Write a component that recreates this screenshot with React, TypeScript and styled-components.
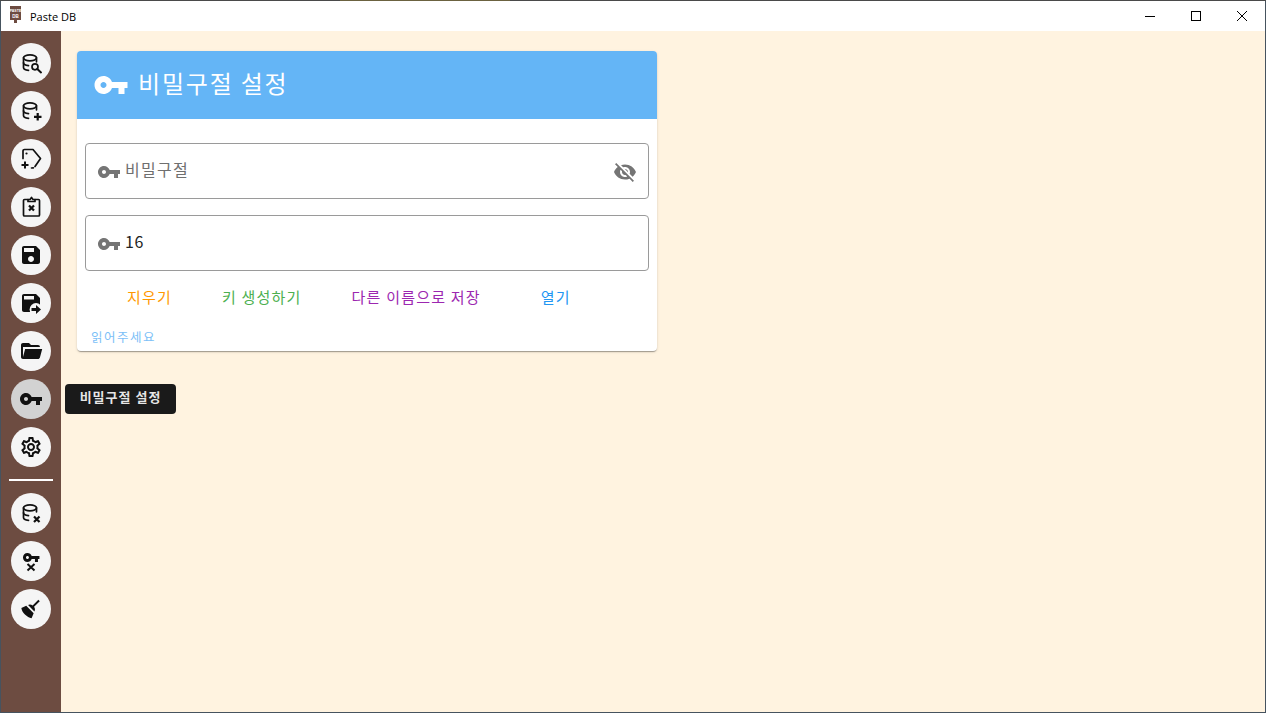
import React from "react";
import styled, { createGlobalStyle } from "styled-components";
import { MdOutlineSettings } from "react-icons/md";

const Global = createGlobalStyle`
  html, body { margin: 0; padding: 0; height: 713px; overflow: hidden; background: #fff3e0; }
  #root { height: 713px; }
  * { box-sizing: border-box; }
`;

const KR = `"Noto Sans CJK KR", "Noto Sans", sans-serif`;

const KEY = "M12.65 10C11.83 7.67 9.61 6 7 6c-3.31 0-6 2.69-6 6s2.69 6 6 6c2.61 0 4.83-1.67 5.65-4H17v4h4v-4h2v-4H12.65zM7 14c-1.1 0-2-.9-2-2s.9-2 2-2 2 .9 2 2-.9 2-2 2z";
const EYE_OFF = "M12 7c2.76 0 5 2.24 5 5 0 .65-.13 1.26-.36 1.83l2.92 2.92c1.51-1.26 2.7-2.89 3.43-4.75-1.73-4.39-6-7.5-11-7.5-1.4 0-2.74.25-3.98.7l2.16 2.16C10.74 7.13 11.35 7 12 7zM2 4.27l2.28 2.28.46.46C3.08 8.3 1.78 10.02 1 12c1.73 4.39 6 7.5 11 7.5 1.55 0 3.03-.3 4.38-.84l.42.42L19.73 22 21 20.73 3.27 3 2 4.27zM7.53 9.8l1.55 1.55c-.05.21-.08.43-.08.65 0 1.66 1.34 3 3 3 .22 0 .44-.03.65-.08l1.55 1.55c-.67.33-1.41.53-2.2.53-2.76 0-5-2.24-5-5 0-.79.2-1.53.53-2.2zm4.31-.78l3.15 3.15.02-.16c0-1.66-1.34-3-3-3l-.17.01z";

const Frame = styled.div`
  width: 1266px;
  height: 713px;
  display: flex;
  flex-direction: column;
  background: #fff3e0;
  border-left: 1px solid #46535f;
  border-right: 1px solid #46535f;
  border-bottom: 1px solid #46535f;
`;
const TopEdge = styled.div`
  height: 1px;
  margin: 0 -1px;
  flex: none;
  background: linear-gradient(90deg, #4a4a4a 0 340px, #6b6240 340px 510px, #4a4a4a 510px);
`;
const TitleBar = styled.header`
  height: 30px;
  flex: none;
  background: #fff;
  display: flex;
  align-items: center;
  padding-left: 9px;
`;
const Logo = styled.svg`
  width: 11px;
  height: 17px;
  margin: 0 9px 3px 0;
  flex: none;
`;
const AppName = styled.span`
  font: 11px "Open Sans", "Noto Sans", sans-serif;
  color: #000;
  flex: 1;
`;
const WinButton = styled.div`
  width: 46px;
  height: 30px;
  display: flex;
  align-items: center;
  justify-content: center;
`;
const Body = styled.div`
  flex: 1;
  display: flex;
  min-height: 0;
`;
const Rail = styled.nav`
  width: 60px;
  flex: none;
  background: #6d4c41;
  padding: 12px 0 0 10px;
  display: flex;
  flex-direction: column;
  gap: 8px;
  position: relative;
`;
const RoundButton = styled.div<{ $active?: boolean }>`
  width: 40px;
  height: 40px;
  border-radius: 50%;
  background: ${(p) => (p.$active ? "#d2d2d2" : "#f5f5f5")};
  display: flex;
  align-items: center;
  justify-content: center;
  color: #111;
`;
const Divider = styled.hr`
  width: 44px;
  height: 2px;
  border: 0;
  margin: 4px 0 4px -2px;
  background: #fff;
`;
const Tip = styled.div`
  position: absolute;
  left: 64px;
  top: 353px;
  width: 111px;
  height: 30px;
  padding-bottom: 5px;
  border-radius: 4px;
  background: #1a1a1a;
  color: #e6e6e6;
  font: 700 13px ${KR};
  letter-spacing: 1px;
  display: flex;
  align-items: center;
  justify-content: center;
  z-index: 2;
`;
const Main = styled.main`
  flex: 1;
  padding: 20px 0 0 16px;
`;
const Card = styled.section`
  width: 580px;
  height: 300px;
  background: #fff;
  border-radius: 4px;
  overflow: hidden;
  box-shadow: 0 2px 1px -1px rgba(0,0,0,.2), 0 1px 1px 0 rgba(0,0,0,.14), 0 1px 3px 0 rgba(0,0,0,.12);
  display: flex;
  flex-direction: column;
`;
const CardHead = styled.div`
  height: 68px;
  background: #64b5f6;
  color: #fff;
  display: flex;
  align-items: center;
  padding: 0 0 0 16px;
  gap: 9px;
`;
const CardTitle = styled.h1`
  margin: 0;
  font: 400 24px ${KR};
  letter-spacing: 1.8px;
  position: relative;
  top: -3px;
`;
const CardBody = styled.div`
  padding: 24px 8px 0;
  display: flex;
  flex-direction: column;
  gap: 16px;
`;
const Field = styled.div`
  height: 56px;
  border: 1px solid #9a9a9a;
  border-radius: 4px;
  display: flex;
  align-items: center;
  padding: 0 11px;
`;
const FieldIcon = styled.svg`
  width: 24px;
  height: 24px;
  fill: #757575;
  flex: none;
  position: relative;
  top: 1px;
`;
const FieldText = styled.span<{ $placeholder?: boolean }>`
  flex: 1;
  margin-left: 4px;
  font: 400 16px ${KR};
  letter-spacing: ${(p) => (p.$placeholder ? "1.3px" : "0.5px")};
  color: ${(p) => (p.$placeholder ? "#6f6f6f" : "#222")};
  position: relative;
  top: -2px;
`;
const Actions = styled.div`
  display: flex;
  padding-left: 50px;
  margin-top: 15px;
  height: 20px;
  align-items: center;
`;
const Action = styled.span<{ $color: string; $gap: number }>`
  color: ${(p) => p.$color};
  font: 400 15px ${KR};
  letter-spacing: 1.2px;
  margin-right: ${(p) => p.$gap}px;
  white-space: nowrap;
`;
const ReadMe = styled.a`
  font: 400 12.5px ${KR};
  letter-spacing: 1.5px;
  color: #7cc0f7;
  margin: 23px 0 0 14px;
  display: block;
  line-height: 16px;
`;

const Svg = styled.svg`
  width: 24px;
  height: 24px;
  flex: none;
`;

const Stroke = ({ children }: { children: React.ReactNode }) => (
  <Svg viewBox="0 0 24 24" fill="none" stroke="#111" strokeWidth="1.7" strokeLinecap="round" strokeLinejoin="round">{children}</Svg>
);
const Fill = ({ d, children }: { d?: string; children?: React.ReactNode }) => (
  <Svg viewBox="0 0 24 24" fill="#111">{d && <path d={d} />}{children}</Svg>
);

const DbBase = () => (
  <>
    <ellipse cx="11" cy="6.8" rx="6.5" ry="3" />
    <path d="M4.5 6.8v9.7c0 1.4 2 2.5 5 2.8" />
    <path d="M17.5 6.8v4" />
    <path d="M4.5 11.8c0 1.4 2 2.5 5 2.8" />
  </>
);

const icons: React.ReactNode[] = [
  <Stroke><DbBase /><circle cx="16" cy="15.8" r="3" /><path d="M18.3 18l3.7 3.4" strokeWidth="2" /></Stroke>,
  <Stroke><DbBase /><path d="M18.7 14v7.5M15 17.8h7.5" strokeWidth="2.2" strokeLinecap="butt" /></Stroke>,
  <Stroke><path d="M4 11.5V4a1.5 1.5 0 0 1 1.5-1.5H14l7.5 9-5.5 8" /><path d="M12.5 21l1.8-.2" /><circle cx="7.5" cy="6.5" r="1.1" fill="#111" stroke="none" /><path d="M6 14.5v7M2.5 18h7" strokeWidth="2" strokeLinecap="butt" /></Stroke>,
  <Stroke><path d="M9 4.5H5.5a1 1 0 0 0-1 1V20a1 1 0 0 0 1 1h14a1 1 0 0 0 1-1V5.5a1 1 0 0 0-1-1H16" /><path d="M9 6.5V4.5h2l1.5-2 1.5 2h2v2z" /><path d="M10 10.5l5 5M15 10.5l-5 5" strokeWidth="2.2" strokeLinecap="butt" /></Stroke>,
  <Fill d="M17 3H5c-1.11 0-2 .9-2 2v14c0 1.1.89 2 2 2h14c1.1 0 2-.9 2-2V7l-4-4zm-5 16c-1.66 0-3-1.34-3-3s1.34-3 3-3 3 1.34 3 3-1.34 3-3 3zm3-10H5V5h10v4z" />,
  <Fill>
    <path d="M17 3H5c-1.11 0-2 .9-2 2v14c0 1.1.89 2 2 2h14c1.1 0 2-.9 2-2V7l-4-4z" />
    <rect x="5" y="5" width="10" height="3.5" fill="#f5f5f5" />
    <circle cx="17" cy="18.5" r="6.4" fill="#f5f5f5" />
    <path d="M12.5 17h4.5v-3l5 4.5-5 4.5v-3h-4.5z" />
  </Fill>,
  <Fill d="M19,20H4C2.89,20 2,19.1 2,18V6C2,4.89 2.89,4 4,4H10L12,6H19A2,2 0 0,1 21,8H21L4,8V18L6.14,10H23.21L20.93,18.5C20.7,19.37 19.92,20 19,20Z" />,
  <Fill d={KEY} />,
  <MdOutlineSettings size={24} color="#111" />,
];
const icons2: React.ReactNode[] = [
  <Stroke><DbBase /><path d="M15 15.5l5.5 5.5M20.5 15.5L15 21" strokeLinecap="butt" strokeWidth="2.2" /></Stroke>,
  <Fill><g transform="translate(3.2 -0.5) scale(.75)"><path d={KEY} /></g><path d="M8.5 15l7 6.5M15.5 15l-7 6.5" stroke="#111" strokeWidth="2" fill="none" /></Fill>,
  <Fill d="M19.36,2.72L20.78,4.14L15.06,9.85C16.13,11.39 16.28,13.24 15.38,14.44L9.06,8.12C10.26,7.22 12.11,7.37 13.65,8.44L19.36,2.72M5.93,17.57C3.92,15.56 2.69,13.16 2.35,10.92L7.23,8.83L14.67,16.27L12.58,21.15C10.34,20.81 7.94,19.58 5.93,17.57Z" />,
];

export default function App() {
  return (
    <>
      <Global />
      <Frame>
        <TopEdge />
        <TitleBar>
          <Logo viewBox="0 0 11 17">
            <rect x="0" y="0" width="11" height="14" fill="#6d4c41" />
            <rect x="4" y="14" width="3" height="3" fill="#6d4c41" />
            <text x="5.5" y="5.5" fontSize="3.6" fill="#fff" textAnchor="middle" fontFamily="Liberation Sans" fontWeight="700">PASTE</text>
            <text x="5.5" y="11.5" fontSize="4.5" fill="#fff" textAnchor="middle" fontFamily="Liberation Sans" fontWeight="700">DB</text>
          </Logo>
          <AppName>Paste DB</AppName>
          <WinButton><svg width="10" height="10" viewBox="0 0 10 10"><path d="M0 5.5h10" stroke="#000" /></svg></WinButton>
          <WinButton><svg width="10" height="10" viewBox="0 0 10 10"><rect x=".5" y=".5" width="9" height="9" fill="none" stroke="#000" /></svg></WinButton>
          <WinButton><svg width="10" height="10" viewBox="0 0 10 10"><path d="M0 0l10 10M10 0L0 10" stroke="#000" /></svg></WinButton>
        </TitleBar>
        <Body>
          <Rail>
            {icons.map((ic, i) => <RoundButton key={i} $active={i === 7}>{ic}</RoundButton>)}
            <Divider />
            {icons2.map((ic, i) => <RoundButton key={i}>{ic}</RoundButton>)}
            <Tip>비밀구절 설정</Tip>
          </Rail>
          <Main>
            <Card>
              <CardHead>
                <svg width="36" height="36" viewBox="0 0 24 24" fill="#fff"><path d={KEY} /></svg>
                <CardTitle>비밀구절 설정</CardTitle>
              </CardHead>
              <CardBody>
                <Field>
                  <FieldIcon viewBox="0 0 24 24"><path d={KEY} /></FieldIcon>
                  <FieldText $placeholder>비밀구절</FieldText>
                  <FieldIcon viewBox="0 0 24 24"><path d={EYE_OFF} /></FieldIcon>
                </Field>
                <Field>
                  <FieldIcon viewBox="0 0 24 24"><path d={KEY} /></FieldIcon>
                  <FieldText>16</FieldText>
                </Field>
              </CardBody>
              <Actions>
                <Action $color="#ff9800" $gap={50}>지우기</Action>
                <Action $color="#4caf50" $gap={50}>키 생성하기</Action>
                <Action $color="#9c27b0" $gap={60}>다른 이름으로 저장</Action>
                <Action $color="#2196f3" $gap={0}>열기</Action>
              </Actions>
              <ReadMe>읽어주세요</ReadMe>
            </Card>
          </Main>
        </Body>
      </Frame>
    </>
  );
}
